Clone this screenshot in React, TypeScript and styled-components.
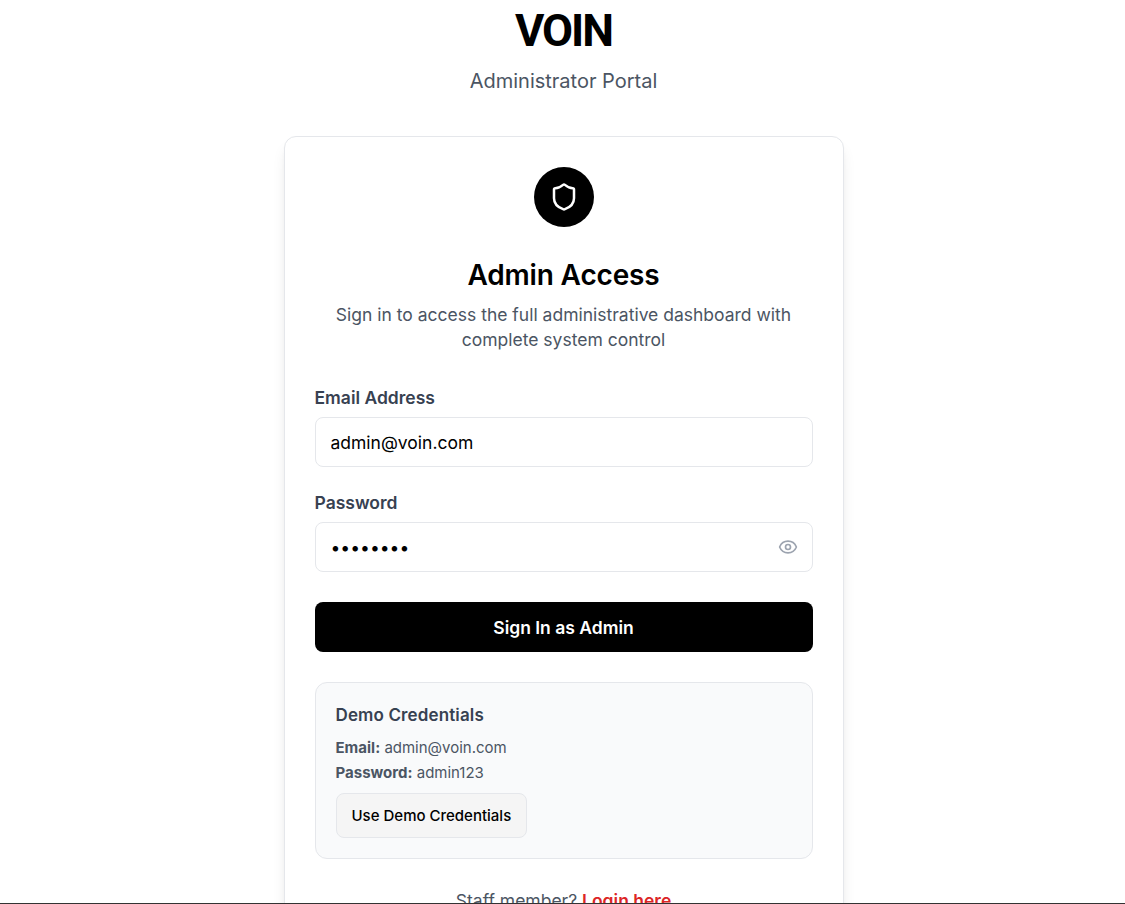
import React from "react";
import styled, { createGlobalStyle } from "styled-components";
import { Shield, Eye } from "lucide-react";

const Global = createGlobalStyle`
  html, body { margin: 0; padding: 0; height: 100%; overflow: hidden; background: #fff; }
  #root { height: 100%; }
  * { box-sizing: border-box; }
`;

const Page = styled.div`
  position: relative;
  height: 904px;
  overflow: hidden;
  background: #fff;
  font-family: Inter, "Liberation Sans", sans-serif;
  display: flex;
  flex-direction: column;
  align-items: center;
  padding: 0 0 0 2px;
`;

const BottomRule = styled.div`
  position: absolute;
  left: 0;
  right: 0;
  bottom: 0;
  height: 1px;
  background: #333;
`;

const Header = styled.header`
  display: flex;
  flex-direction: column;
  align-items: center;
  margin-top: 3px;
`;

const Logo = styled.h1`
  margin: 0;
  font-family: Roboto, Inter, sans-serif;
  font-size: 45px;
  line-height: 56px;
  font-weight: 700;
  letter-spacing: -2px;
  color: #000;
`;

const Subtitle = styled.p`
  margin: 8px 0 0;
  font-size: 20px;
  line-height: 28px;
  color: #4b5563;
`;

const Card = styled.main`
  width: 560px;
  margin-top: 41px;
  flex: none;
  padding: 30px;
  background: #fff;
  border: 1px solid #e5e7eb;
  border-radius: 12px;
  box-shadow: 0 10px 15px -3px rgba(0, 0, 0, 0.1), 0 4px 6px -4px rgba(0, 0, 0, 0.1);
  display: flex;
  flex-direction: column;
`;

const Badge = styled.div`
  width: 60px;
  height: 60px;
  border-radius: 50%;
  background: #000;
  color: #fff;
  display: flex;
  align-items: center;
  justify-content: center;
  align-self: center;
`;

const Title = styled.h2`
  margin: 30px 0 0;
  text-align: center;
  font-size: 28px;
  line-height: 36px;
  font-weight: 600;
  letter-spacing: -0.17px;
  color: #000;
`;

const Lead = styled.p`
  margin: 9px 0 0;
  text-align: center;
  font-size: 17.5px;
  line-height: 25px;
  color: #4b5563;
`;

const Form = styled.form`
  margin-top: 34px;
  display: flex;
  flex-direction: column;
`;

const Field = styled.div`
  position: relative;
  margin-bottom: 24px;
`;

const Label = styled.label`
  display: block;
  margin-bottom: 7px;
  font-size: 17.5px;
  line-height: 24px;
  font-weight: 600;
  color: #374151;
`;

const InputBox = styled.div`
  position: relative;
`;

const Input = styled.input`
  display: block;
  width: 100%;
  height: 50px;
  padding: 0 15px;
  border: 1px solid #e5e7eb;
  border-radius: 8px;
  background: #fff;
  font-family: Inter, sans-serif;
  font-size: 17.5px;
  color: #000;
  outline: none;
`;

const EyeButton = styled.span`
  position: absolute;
  top: 15px;
  right: 15px;
  color: #9ca3af;
  display: flex;
`;

const Submit = styled.button`
  height: 50px;
  margin-top: 6px;
  border: 0;
  border-radius: 8px;
  background: #000;
  color: #fff;
  font-family: Inter, sans-serif;
  font-size: 17.5px;
  font-weight: 600;
`;

const Demo = styled.section`
  margin-top: 30px;
  padding: 20px;
  background: #f9fafb;
  border: 1px solid #e5e7eb;
  border-radius: 12px;
`;

const DemoTitle = styled.h4`
  margin: 0 0 8px;
  height: 24px;
  font-size: 17px;
  line-height: 24px;
  font-weight: 600;
  letter-spacing: 0.13px;
  color: #374151;
`;

const DemoLine = styled.p`
  margin: 0;
  font-size: 15px;
  line-height: 25px;
  color: #4b5563;
  strong { font-weight: 700; }
`;

const DemoButton = styled.button`
  display: block;
  margin-top: 8px;
  height: 45px;
  padding: 0 15px;
  background: #f5f5f5;
  border: 1px solid #e5e7eb;
  border-radius: 8px;
  font-family: Inter, sans-serif;
  font-size: 15px;
  font-weight: 500;
  color: #000;
`;

const Footer = styled.p`
  margin: 30px 0 0;
  text-align: center;
  font-size: 17.5px;
  line-height: 24px;
  color: #4b5563;
  a { color: #dc2626; font-weight: 600; text-decoration: none; }
`;

export default function App() {
  return (
    <Page>
      <Global />
      <Header>
        <Logo>VOIN</Logo>
        <Subtitle>Administrator Portal</Subtitle>
      </Header>
      <Card>
        <Badge><Shield size={30} strokeWidth={2} /></Badge>
        <Title>Admin Access</Title>
        <Lead>Sign in to access the full administrative dashboard with complete system control</Lead>
        <Form onSubmit={(e) => e.preventDefault()}>
          <Field>
            <Label>Email Address</Label>
            <Input type="email" defaultValue="admin@voin.com" />
          </Field>
          <Field>
            <Label>Password</Label>
            <InputBox>
              <Input type="password" defaultValue="admin123" />
              <EyeButton><Eye size={20} /></EyeButton>
            </InputBox>
          </Field>
          <Submit type="submit">Sign In as Admin</Submit>
        </Form>
        <Demo>
          <DemoTitle>Demo Credentials</DemoTitle>
          <DemoLine><strong>Email:</strong> admin@voin.com</DemoLine>
          <DemoLine><strong>Password:</strong> admin123</DemoLine>
          <DemoButton type="button">Use Demo Credentials</DemoButton>
        </Demo>
        <Footer>Staff member? <a href="#">Login here</a></Footer>
      </Card>
      <BottomRule />
    </Page>
  );
}
